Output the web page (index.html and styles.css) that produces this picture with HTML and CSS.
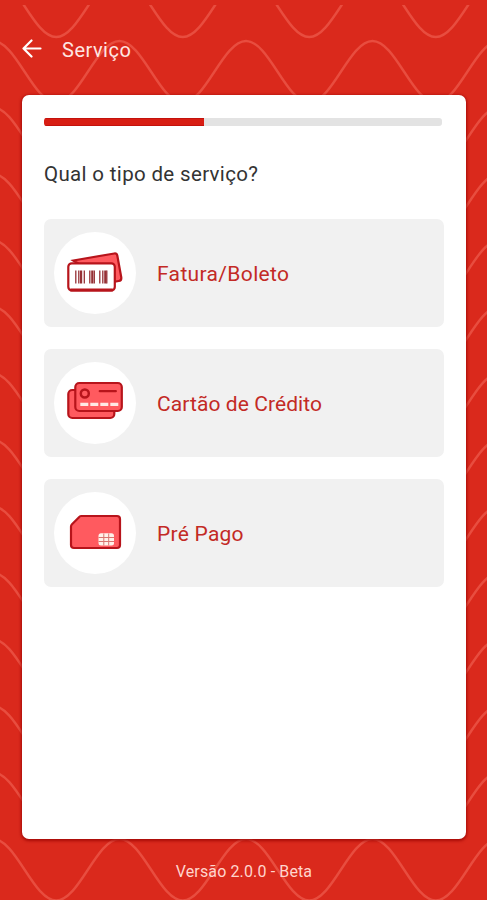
FILE: index.html
```html
<!DOCTYPE html>
<html lang="pt-BR">
<head>
<meta charset="utf-8">
<title>Serviço</title>
<link rel="stylesheet" href="styles.css">
</head>
<body>
<svg class="waves" width="487" height="900" viewBox="0 0 487 900" aria-hidden="true">
  <defs>
    <path id="wave" d="M-7 0c23 0 40.250 61.500 63.250 61.500s40.250-61.500 63.250-61.500 40.250 61.500 63.250 61.500 40.250-61.500 63.250-61.500 40.250 61.500 63.250 61.500 40.250-61.500 63.250-61.500 40.250 61.500 63.250 61.500 40.250-61.500 63.250-61.500"/>
    <clipPath id="below-status"><path d="M0 5h487v895H0z"/></clipPath>
  </defs>
  <g clip-path="url(#below-status)">
    <use href="#wave" y="-24.500"/><use href="#wave" y="41"/><use href="#wave" y="107.500"/><use href="#wave" y="174"/>
    <use href="#wave" y="240.500"/><use href="#wave" y="307"/><use href="#wave" y="373.500"/><use href="#wave" y="440"/>
    <use href="#wave" y="506.500"/><use href="#wave" y="573"/><use href="#wave" y="639.500"/><use href="#wave" y="706"/>
    <use href="#wave" y="772.500"/><use href="#wave" y="839"/>
  </g>
</svg>
<div class="screen">
  <header class="header">
    <svg class="back" width="20" height="20" viewBox="0 0 20 20"><path d="M9.500 1.500 1.500 9.500l8 8M1.500 9.500h17"/></svg>
    <h1 class="title">Serviço</h1>
  </header>
  <main class="card">
    <div class="progress"><div class="bar"></div></div>
    <h2 class="question">Qual o tipo de serviço?</h2>
    <div class="options">
      <a class="option">
        <span class="circle">
          <svg width="60" height="44" viewBox="0.7 0.500 60 44">
            <path class="soft" d="M9 10 50 3q2.500-.3 3 2l4 22q.3 3-2.500 3.500L45 32z"/>
            <rect class="paper" x="4" y="12.800" width="46.500" height="27.200" rx="3.500"/>
            <path class="edge" d="M6 39.500h42.500"/>
            <path class="bars" d="M11.500 20v13M14.500 20v13M20 20v13M25.500 20v13M30 20v13M35.500 20v13M38.500 20v13M42.500 20v13"/>
            <path class="bars thick" d="M16.800 20v13M28 20v13M41 20v13"/>
          </svg>
        </span>
        <span class="label bill">Fatura/Boleto</span>
      </a>
      <a class="option">
        <span class="circle">
          <svg width="60" height="44" viewBox="0.7 0.500 60 44">
            <rect class="soft" x="4" y="9.500" width="46" height="28" rx="4"/>
            <rect class="soft" x="11" y="2.500" width="46.500" height="28" rx="4"/>
            <circle class="ring" cx="20.500" cy="13" r="4"/>
            <path class="stripe" d="M35.500 10.700h16"/>
            <path class="dashes" d="M16 23.800h38"/>
          </svg>
        </span>
        <span class="label credit">Cartão de Crédito</span>
      </a>
      <a class="option">
        <span class="circle">
          <svg width="60" height="44" viewBox="1 0.500 60 44">
            <path class="soft" d="M17 5.500h36q3 0 3 3v26q0 3-3 3H10q-3 0-3-3V16q0-1.300 1-2.300l7-7q.8-1.200 2-1.200z"/>
            <rect class="chip" x="34.500" y="22.800" width="15.500" height="12.200" rx="2.500"/>
            <path class="chip-lines" d="M34.500 27h15.500M34.500 31h15.500M39.800 23v12M44.700 23v12"/>
          </svg>
        </span>
        <span class="label prepaid">Pré Pago</span>
      </a>
    </div>
  </main>
  <footer class="version">Versão 2.0.0 - Beta</footer>
</div>
</body>
</html>
```

FILE: styles.css
```css
* { box-sizing: border-box; }
body {
  margin: 0;
  background: #da291c;
  font-family: Roboto, "Liberation Sans", sans-serif;
}
.waves {
  position: absolute;
  inset: 0;
  fill: none;
  stroke: #e84d3f;
  stroke-width: 2.4;
}
.screen {
  position: relative;
  height: 900px;
  padding: 0 21px 0 22px;
  display: flex;
  flex-direction: column;
}
.header {
  height: 95px;
  flex: none;
  padding-top: 3px;
  display: flex;
  align-items: center;
  color: #ffe6e2;
}
.back {
  fill: none;
  stroke: #fff;
  stroke-width: 2.2;
  stroke-linecap: round;
  stroke-linejoin: round;
}
.title {
  margin: 2px 0 0 20px;
  font-size: 20px;
  font-weight: 400;
  letter-spacing: .5px;
}
.card {
  height: 744px;
  flex: none;
  padding: 23px 22px 0;
  background: #fff;
  border-radius: 7px;
  box-shadow: 0 1px 3px 1px rgba(150, 0, 0, .75);
}
.progress {
  width: 398px;
  height: 8px;
  background: #e3e3e3;
  border-radius: 3px;
  overflow: hidden;
}
.bar {
  width: 160px;
  height: 8px;
  background: #d81e13;
  border: solid #c4120c;
  border-width: 1px 0;
}
.question {
  margin: 33px 0 0;
  height: 30px;
  line-height: 30px;
  font-size: 20.500px;
  font-weight: 400;
  letter-spacing: .34px;
  color: #333;
}
.options {
  margin-top: 29.500px;
  display: grid;
  gap: 22px;
}
.option {
  height: 108px;
  padding-left: 10px;
  display: flex;
  align-items: center;
  background: #f1f1f1;
  border-radius: 7px;
}
.circle {
  width: 82px;
  height: 82px;
  display: flex;
  align-items: center;
  justify-content: center;
  background: #fff;
  border-radius: 50%;
}
.soft { fill: #ff5a5f; stroke: #b7141b; stroke-width: 2.2; }
.paper { fill: #fff; stroke: #b7141b; stroke-width: 2.2; }
.edge { fill: none; stroke: #b7141b; stroke-width: 3; }
.bars { fill: none; stroke: #963035; stroke-width: 1.3; }
.thick { stroke-width: 2.2; }
.ring { fill: none; stroke: #b7141b; stroke-width: 2.5; }
.stripe { stroke: #b7141b; stroke-width: 2.3; stroke-linecap: round; }
.dashes { stroke: #ffe9e5; stroke-width: 3.2; stroke-dasharray: 8 2; }
.chip { fill: #fff1ea; }
.chip-lines { fill: none; stroke: #d97570; stroke-width: 1; }
.label {
  margin: 2px 0 0 21px;
  font-size: 21px;
  color: #c32a25;
}
.bill { letter-spacing: .35px; }
.credit { letter-spacing: .08px; }
.prepaid { letter-spacing: .25px; }
.version {
  padding-top: 22px;
  line-height: 22px;
  text-align: center;
  font-size: 16px;
  letter-spacing: .13px;
  color: #ffd5cd;
}
```
